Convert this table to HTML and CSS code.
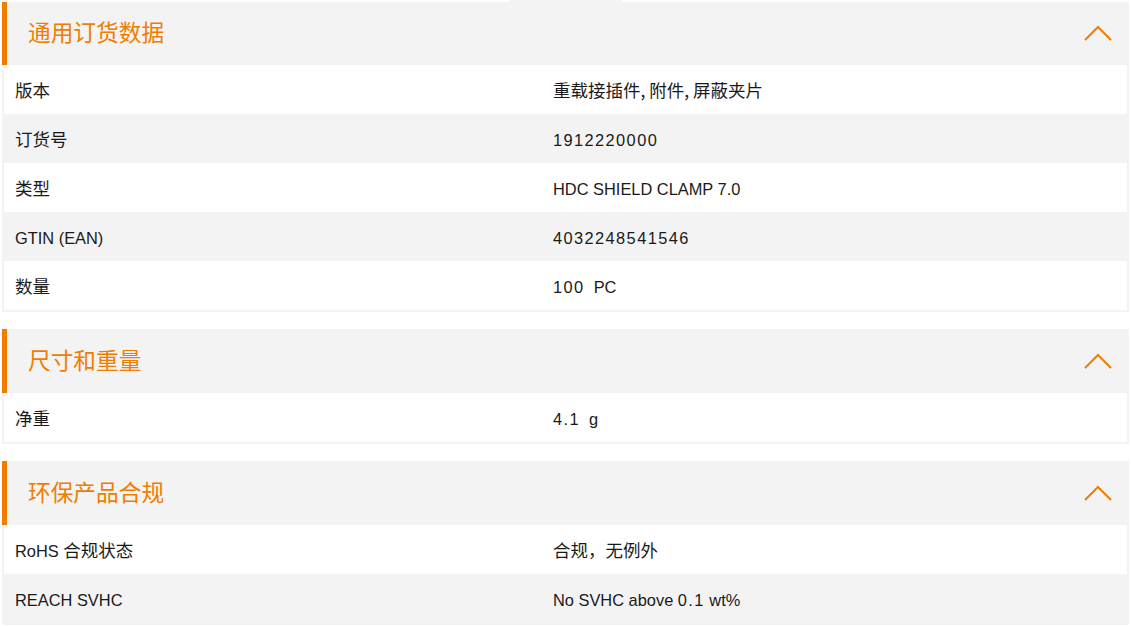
FILE: index.html
```html
<!DOCTYPE html>
<html lang="zh">
<head>
<meta charset="utf-8">
<link rel="stylesheet" href="styles.css">
</head>
<body>
<div class="page">
  <div class="tab"></div>
  <section class="panel first">
    <div class="panel-head">
      <h2 class="panel-title">通用订货数据</h2>
      <svg class="chev" width="28" height="16" viewBox="0 0 28 16"><path d="M1 15 L14 2 L27 15" fill="none" stroke="#f07d00" stroke-width="2"/></svg>
    </div>
    <div class="rows">
      <div class="row"><div class="k zh">版本</div><div class="v zh">重载接插件, 附件, 屏蔽夹片</div></div>
      <div class="row alt"><div class="k zh">订货号</div><div class="v"><span class="num">1912220000</span></div></div>
      <div class="row"><div class="k zh">类型</div><div class="v">HDC SHIELD CLAMP 7.0</div></div>
      <div class="row alt"><div class="k">GTIN (EAN)</div><div class="v"><span class="num">4032248541546</span></div></div>
      <div class="row"><div class="k zh">数量</div><div class="v"><span class="num">100</span>&nbsp; PC</div></div>
    </div>
  </section>
  <section class="panel">
    <div class="panel-head">
      <h2 class="panel-title">尺寸和重量</h2>
      <svg class="chev" width="28" height="16" viewBox="0 0 28 16"><path d="M1 15 L14 2 L27 15" fill="none" stroke="#f07d00" stroke-width="2"/></svg>
    </div>
    <div class="rows">
      <div class="row"><div class="k zh">净重</div><div class="v"><span class="num">4.1</span>&nbsp; g</div></div>
    </div>
  </section>
  <section class="panel">
    <div class="panel-head">
      <h2 class="panel-title">环保产品合规</h2>
      <svg class="chev" width="28" height="16" viewBox="0 0 28 16"><path d="M1 15 L14 2 L27 15" fill="none" stroke="#f07d00" stroke-width="2"/></svg>
    </div>
    <div class="rows">
      <div class="row"><div class="k">RoHS <span class="zh">合规状态</span></div><div class="v zh">合规，无例外</div></div>
      <div class="row alt"><div class="k">REACH SVHC</div><div class="v">No SVHC above <span class="num">0.1</span> wt%</div></div>
    </div>
  </section>
</div>
</body>
</html>
```
FILE: styles.css
```css
html, body {
  margin: 0;
  padding: 0;
  background: #ffffff;
}
body {
  font-family: "Liberation Sans", "Noto Sans CJK SC", sans-serif;
  color: #1a1a1a;
  width: 1131px;
  height: 627px;
  overflow: hidden;
}
.page {
  padding: 0 2px;
}
.tab {
  margin-left: 507px;
  width: 113px;
  height: 2px;
  background: #f3f3f3;
}
.panel {
  margin-bottom: 17px;
  width: 1127px;
}
.panel-head {
  height: 64px;
  background: #f3f3f3;
  border-left: 5px solid #f07d00;
  display: flex;
  align-items: center;
  justify-content: space-between;
  padding: 0 17px 2px 21px;
  box-sizing: border-box;
}
.first .panel-head {
  height: 63px;
}
.panel-title {
  margin: 0;
  font-family: "Noto Sans CJK SC", sans-serif;
  font-weight: 400;
  font-size: 22.7px;
  color: #f07d00;
  line-height: 1;
}
.chev {
  display: block;
  margin-top: 1px;
}
.rows {
  border: 2px solid #f3f3f3;
  border-top: 0;
}
.row {
  display: grid;
  grid-template-columns: 538px 1fr;
  height: 49px;
  align-items: center;
  background: #ffffff;
  font-size: 16.4px;
  line-height: 20px;
}
.row.alt {
  background: #f3f3f3;
}
.k, .v {
  padding: 2px 0 0 11px;
}
.zh {
  font-family: "Noto Sans CJK SC", "Liberation Sans", sans-serif;
  font-size: 17.5px;
}
.k.zh, .v.zh {
  padding-top: 0;
}
.num {
  letter-spacing: 1.4px;
}
```
